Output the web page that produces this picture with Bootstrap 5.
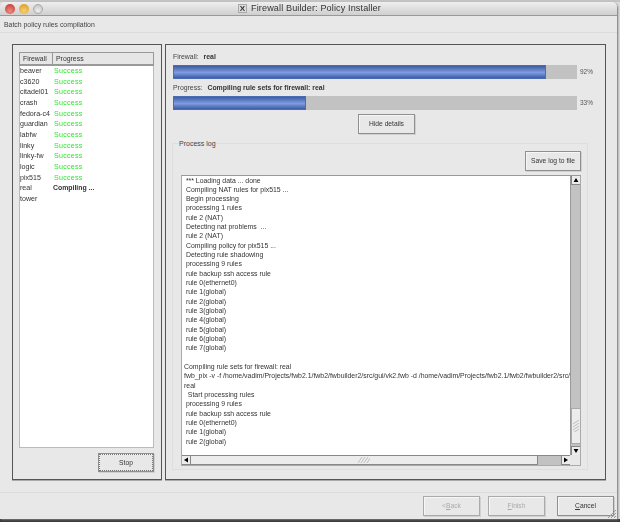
<!DOCTYPE html>
<html lang="en"><head><meta charset="utf-8"><title>Firewall Builder: Policy Installer</title>
<link rel="stylesheet" href="https://cdn.jsdelivr.net/npm/bootstrap@5.3.0/dist/css/bootstrap.min.css">
<style>
html,body{width:620px;height:522px;overflow:hidden;margin:0;background:#dcdcdc}
body{font-family:"Liberation Sans",Arial,sans-serif;font-size:6.9px;line-height:9.33px;color:#333}
.scene{width:620px;height:522px;filter:blur(.4px)}
.topstrip{height:2px;background:#c4c4c4}
.wnd{width:617px;height:517px;background:#e8e8e8;border-radius:5px 5px 0 0;box-shadow:1px 1px 2px #777;position:relative}
.tbar{height:14px;display:grid;grid-template-columns:1fr auto 1fr;background:linear-gradient(#efefef,#cfcfcf);border-bottom:1px solid #999;border-radius:5px 5px 0 0;padding:0 5px;font-size:9.1px;color:#333;letter-spacing:.12px}
.lights{gap:4px}
.lamp{width:10px;height:10px;border-radius:50%}
.lamp-r{background:radial-gradient(circle at 50% 70%,#f08a80,#c0302c)}
.lamp-y{background:radial-gradient(circle at 50% 70%,#f8d070,#d8941c)}
.lamp-g{background:radial-gradient(circle at 50% 70%,#f0f0f0,#bdbdbd);border:1px solid #aaa}
.xbox{width:9px;height:9px;background:#ddd;border:1px solid #aaa;font-size:8px;line-height:7px;text-align:center;font-weight:700;margin-right:4px}
.ttl{padding-left:2px}
.sub{height:17px;padding:4px 0 0 4px;border-bottom:1px solid #dcdcdc;font-size:6.9px;color:#444}
.mainrow{padding:11px 11px 0 12px;gap:3px;height:459px}
.pane{border:1px solid #555;height:436px;box-shadow:0 1px 0 #aaa}
.leftp{width:150px;padding:7px 7px 0 6px}
.rightp{width:441px;padding:7px 7px 0 7px}
.fwt{height:396px;background:#fff;border:1px solid #bbb;border-top:0}
.fwh{height:14px;background:#e6e6e6;border:1px solid #999;border-bottom-width:2px;margin:0 -1px;display:flex;font-size:6.9px;line-height:11px}
.fwh>div:first-child{width:33px;padding-left:3px;border-right:1px solid #999}
.fwh>div:last-child{padding-left:3px}
.fwr{display:flex;height:10.67px;line-height:10.67px;font-size:7.1px}
.fwr>div:first-child{width:34px;color:#333}
.ok{color:#2ee62e;letter-spacing:.25px}
.busy{color:#333;font-weight:700;font-size:6.9px;margin-left:-1px}
.mbtn{display:flex;align-items:center;justify-content:center;background:#e8e8e8;border:1px solid #8f8f8f;box-shadow:inset 1px 1px 0 #f6f6f6,1px 1px 0 #d0d0d0;color:#333;font-size:6.7px;border-radius:0;padding:0}
.stopb{width:56px;height:19px;margin:5px 0 0 79px;outline:1px dotted #777;outline-offset:-2px}
.lab{height:10px;line-height:10px;font-size:6.9px;margin-bottom:3px;color:#444}
.lab b{color:#333;margin-left:3px}
.barw{display:flex;height:14px;margin-bottom:4px;width:428px}
.track{width:404px;height:14px;background:#c2c2c2}
.fill{height:14px;background:linear-gradient(#3f5da5,#7e9ce0 55%,#3d5ca8);border:1px solid #4c6bb2}
.pct{margin-left:3px;line-height:14px;font-size:6.5px;color:#555}
.hide{width:57px;height:20px;margin:0 0 0 185px}
.grp{width:416px;height:327px;margin:9px 0 0 -1px;border:1px solid #dedede;padding:7px 0 0 8px;position:relative}
.grpt{position:absolute;top:-5px;left:6px;background:#e8e8e8;font-size:7px;line-height:9px;color:#444}
.saveb{width:56px;height:20px;margin-left:344px}
.logbox{width:400px;height:291px;margin-top:4px;background:#fff;border:1px solid #aaa;border-top-color:#999;position:relative;overflow:hidden}
.logt{margin-top:-.5px;padding-left:2px;width:388px;height:279px;overflow:hidden;white-space:pre;font-size:6.9px}
.vbar{position:absolute;top:-1px;right:-1px;width:11px;height:281px;background:#c2c2c2;border-left:1px solid #999}
.hbar{position:absolute;left:-1px;bottom:-1px;height:11px;width:390px;background:#c2c2c2;border-top:1px solid #888}
.corner{position:absolute;right:-1px;bottom:-1px;width:11px;height:11px;background:#e8e8e8}
.sbtn{position:absolute;width:10px;height:10px;background:#ececec;border:1px solid #888;color:#111;display:flex;align-items:center;justify-content:center}
.thumbv{position:absolute;left:0;top:233px;width:10px;height:36px;background:#ececec;border:1px solid #aaa;display:flex;align-items:center;justify-content:center}
.thumbh{position:absolute;left:9px;top:0;height:9px;width:348px;background:#ececec;border-bottom:1px solid #888;border-right:1px solid #888;display:flex;align-items:center;justify-content:center}
.foot{border-top:1px solid #dcdcdc;height:27px;padding:3px 0 0 423px;gap:8px}
.fbtn{width:57px;height:20px}
.fbtn.gap12{margin-left:4px}
.dis{color:#aaa;border-color:#aaa}
.grip{position:absolute;right:1px;bottom:1px}
.bottom{height:3px;background:#3a3a3a}
u{text-decoration:underline}
</style></head><body>
<div class="scene">
<div class="topstrip"></div>
<div class="wnd d-flex flex-column">
  <div class="tbar align-items-center">
    <div class="lights d-flex align-items-center"><span class="lamp lamp-r"></span><span class="lamp lamp-y"></span><span class="lamp lamp-g"></span></div>
    <div class="d-flex align-items-center ttl"><span class="xbox">X</span>Firewall Builder: Policy Installer</div>
    <div></div>
  </div>
  <div class="sub">Batch policy rules compilation</div>
  <div class="mainrow d-flex">
    <div class="pane leftp">
      <div class="fwt">
        <div class="fwh"><div>Firewall</div><div>Progress</div></div>
        <div class="fwr"><div>beaver</div><div class="ok">Success</div></div>
        <div class="fwr"><div>c3620</div><div class="ok">Success</div></div>
        <div class="fwr"><div>citadel01</div><div class="ok">Success</div></div>
        <div class="fwr"><div>crash</div><div class="ok">Success</div></div>
        <div class="fwr"><div>fedora-c4</div><div class="ok">Success</div></div>
        <div class="fwr"><div>guardian</div><div class="ok">Success</div></div>
        <div class="fwr"><div>labfw</div><div class="ok">Success</div></div>
        <div class="fwr"><div>linky</div><div class="ok">Success</div></div>
        <div class="fwr"><div>linky-fw</div><div class="ok">Success</div></div>
        <div class="fwr"><div>logic</div><div class="ok">Success</div></div>
        <div class="fwr"><div>pix515</div><div class="ok">Success</div></div>
        <div class="fwr"><div>real</div><div class="busy">Compiling ...</div></div>
        <div class="fwr"><div>tower</div><div></div></div>
      </div>
      <button class="mbtn stopb" type="button">Stop</button>
    </div>
    <div class="pane rightp">
      <div class="lab">Firewall: <b>real</b></div>
      <div class="barw"><div class="track"><div class="fill" style="width:92.3%"></div></div><div class="pct">92%</div></div>
      <div class="lab">Progress: <b>Compiling rule sets for firewall: real</b></div>
      <div class="barw"><div class="track"><div class="fill" style="width:33%"></div></div><div class="pct">33%</div></div>
      <button class="mbtn hide" type="button">Hide details</button>
      <div class="grp">
        <div class="grpt">Process log</div>
        <button class="mbtn saveb" type="button">Save log to file</button>
        <div class="logbox">
<div class="logt"> *** Loading data ... done
 Compiling NAT rules for pix515 ...
 Begin processing
 processing 1 rules
 rule 2 (NAT)
 Detecting nat problems  ...
 rule 2 (NAT)
 Compiling policy for pix515 ...
 Detecting rule shadowing
 processing 9 rules
 rule backup ssh access rule
 rule 0(ethernet0)
 rule 1(global)
 rule 2(global)
 rule 3(global)
 rule 4(global)
 rule 5(global)
 rule 6(global)
 rule 7(global)

Compiling rule sets for firewall: real
fwb_pix -v -f /home/vadim/Projects/fwb2.1/fwb2/fwbuilder2/src/gui/vk2.fwb -d /home/vadim/Projects/fwb2.1/fwb2/fwbuilder2/src/
real
  Start processing rules
 processing 9 rules
 rule backup ssh access rule
 rule 0(ethernet0)
 rule 1(global)
 rule 2(global)</div>
          <div class="vbar">
            <div class="thumbv"><svg width="6" height="12" viewBox="0 0 6 12"><path d="M0 4 6 0M0 7 6 3M0 10 6 6M0 13 6 9" stroke="#aaa" stroke-width=".7" fill="none"/></svg></div>
            <div class="sbtn" style="top:0;left:0"><svg width="6" height="4" viewBox="0 0 6 5"><path d="M3 0 6 5H0z"/></svg></div>
            <div class="sbtn" style="bottom:0;left:0"><svg width="6" height="4" viewBox="0 0 6 5"><path d="M3 5 6 0H0z"/></svg></div>
          </div>
          <div class="hbar">
            <div class="thumbh"><svg width="12" height="6" viewBox="0 0 12 6"><path d="M0 6 4 0M3 6 7 0M6 6 10 0M9 6 13 0" stroke="#aaa" stroke-width=".7" fill="none"/></svg></div>
            <div class="sbtn" style="top:-1px;left:0"><svg width="4" height="6" viewBox="0 0 5 6"><path d="M0 3 5 0V6z"/></svg></div>
            <div class="sbtn" style="top:-1px;right:0"><svg width="4" height="6" viewBox="0 0 5 6"><path d="M5 3 0 0V6z"/></svg></div>
          </div>
          <div class="corner"></div>
        </div>
      </div>
    </div>
  </div>
  <div class="foot d-flex">
    <button class="mbtn fbtn dis" type="button">&lt; <u>B</u>ack</button>
    <button class="mbtn fbtn dis" type="button"><u>F</u>inish</button>
    <button class="mbtn fbtn gap12" type="button"><u>C</u>ancel</button>
  </div>
  <svg class="grip" width="9" height="9" viewBox="0 0 9 9"><path d="M1 9 9 1M4 9 9 4M7 9 9 7" stroke="#999" fill="none"/></svg>
</div>
<div class="bottom"></div>
</div>
</body></html>
